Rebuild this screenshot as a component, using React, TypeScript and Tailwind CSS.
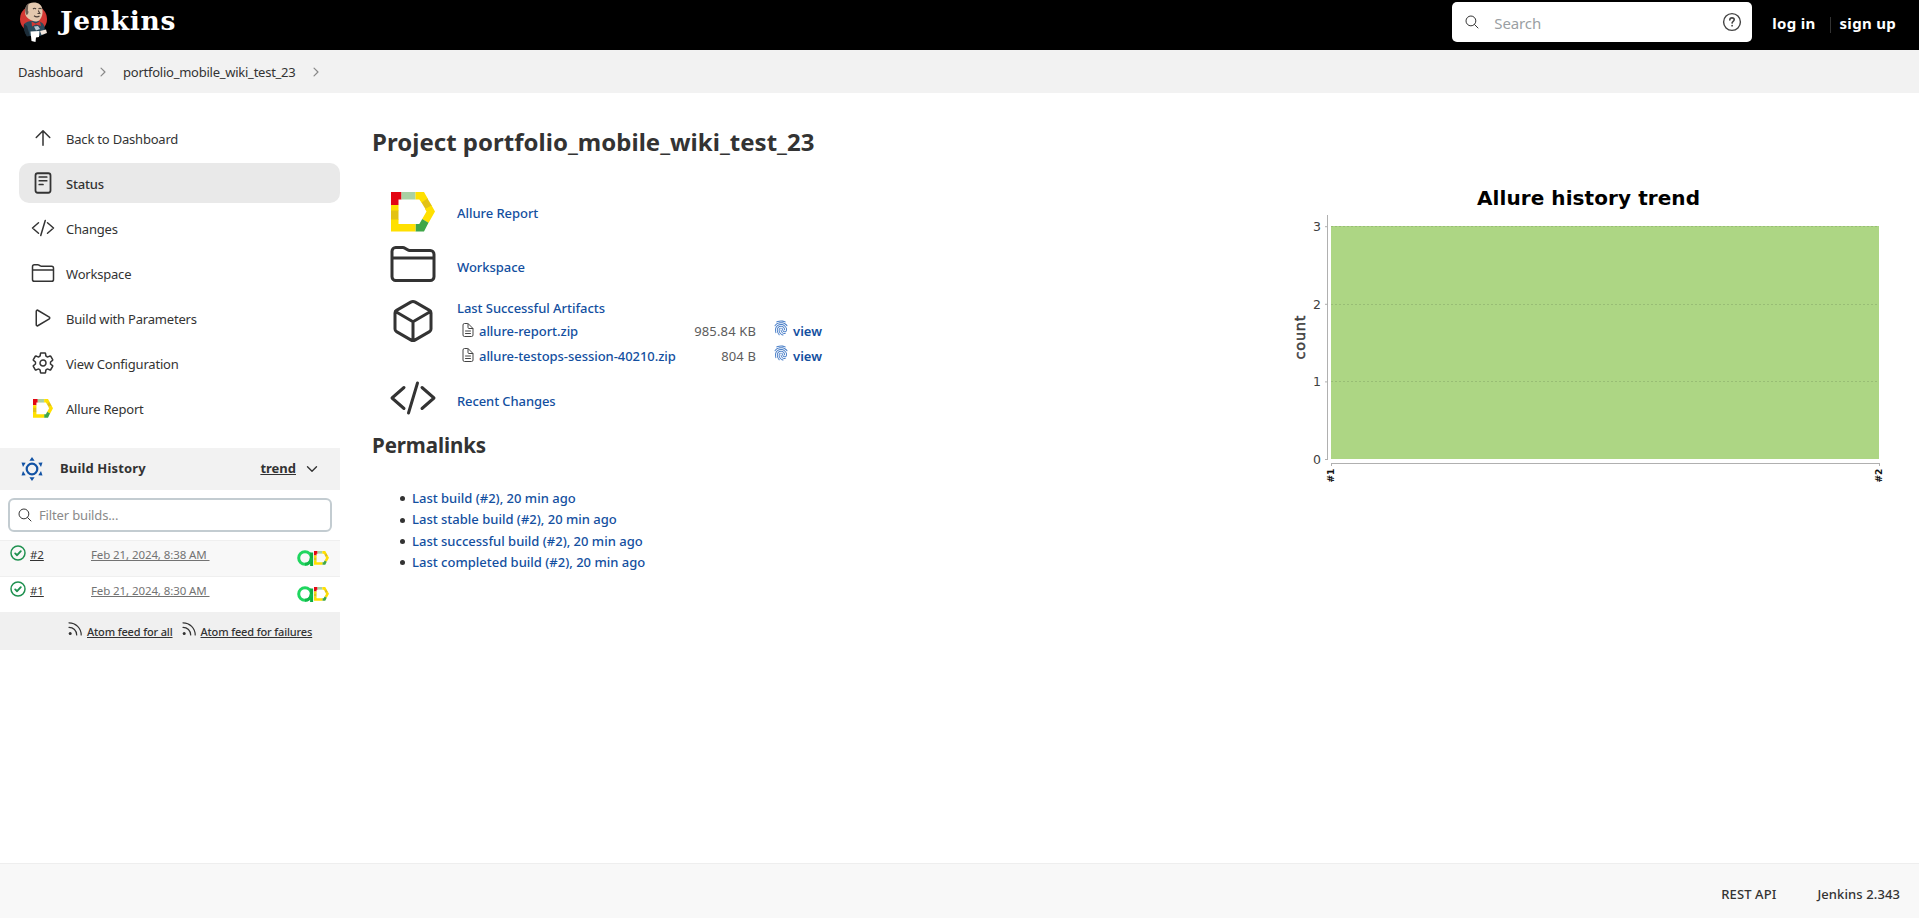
import React from "react";
import { IoFingerPrint, IoDocumentTextOutline, IoSearchOutline, IoSettingsOutline } from "react-icons/io5";

type IconProps = { className?: string };

function Stroke({ className, children }: IconProps & { children: React.ReactNode }) {
  return (
    <svg viewBox="0 0 512 512" className={className} fill="none" stroke="currentColor" strokeWidth="32" strokeLinecap="round" strokeLinejoin="round">
      {children}
    </svg>
  );
}

const ArrowUp = (p: IconProps) => (
  <Stroke {...p}><path d="M112 244 256 100 400 244M256 120V412" /></Stroke>
);
const Reader = (p: IconProps) => (
  <Stroke {...p}><rect x="96" y="48" width="320" height="416" rx="48" strokeWidth="38" /><path strokeWidth="36" d="M176 128h160M176 208h160M176 288h80" /></Stroke>
);
const Code = (p: IconProps) => (
  <Stroke {...p}><path d="M160 368 32 256 160 144M352 368 480 256 352 144M304 96 208 416" /></Stroke>
);
const Folder = (p: IconProps) => (
  <Stroke {...p}>
    <path d="M440 432H72a40 40 0 0 1-40-40V120a40 40 0 0 1 40-40h75.89a40 40 0 0 1 22.19 6.72l27.84 18.56a40 40 0 0 0 22.19 6.72H440a40 40 0 0 1 40 40V392a40 40 0 0 1-40 40ZM32 192H480" />
  </Stroke>
);
const Play = (p: IconProps) => (
  <Stroke {...p}><path d="M112 111V401c0 17.44 17 28.52 31 20.16l247.9-148.37c12.12-7.25 12.12-26.33 0-33.58L143 90.84C129 82.48 112 93.56 112 111Z" /></Stroke>
);
const Gear = (p: IconProps) => <IoSettingsOutline {...p} />;
const Cube = (p: IconProps) => (
  <Stroke {...p}>
    <path d="M448 341.37V170.61A32 32 0 0 0 432.11 143l-152-88.46a47.94 47.94 0 0 0-48.24 0L79.89 143A32 32 0 0 0 64 170.61V341.37A32 32 0 0 0 79.89 369l152 88.46a48 48 0 0 0 48.24 0l152-88.46A32 32 0 0 0 448 341.37ZM69 154 256 264 443 154M256 464V264" />
  </Stroke>
);
const ChevronRight = (p: IconProps) => (
  <Stroke {...p}><path strokeWidth="44" d="M184 112 328 256 184 400" /></Stroke>
);
const ChevronDown = (p: IconProps) => (
  <Stroke {...p}><path strokeWidth="44" d="M112 184 256 328 400 184" /></Stroke>
);
const Help = (p: IconProps) => (
  <svg viewBox="0 0 20 20" className={p.className} fill="none" stroke="currentColor" strokeWidth="1.4" strokeLinecap="round">
    <circle cx="10" cy="10" r="8.4" />
    <path strokeWidth="1.6" d="M7.8 8c0-1.5 1-2.1 2.2-2.1s2.2.8 2.2 1.9c0 1.500-2.100 1.700-2.100 3.300" />
    <circle cx="10.100" cy="13.700" r=".9" fill="currentColor" stroke="none" />
  </svg>
);
const Rss = (p: IconProps) => (
  <svg viewBox="0 0 14 14" className={p.className} fill="none" stroke="currentColor" strokeWidth="1.2" strokeLinecap="round">
    <path d="M1 .8c6.800 0 12.200 5.400 12.200 12.200M1 5.300c4.300 0 7.700 3.400 7.700 7.700" />
    <circle cx="2.200" cy="11.600" r="1.500" fill="currentColor" stroke="none" />
  </svg>
);
const Check = (p: IconProps) => (
  <svg viewBox="0 0 16 16" className={p.className} fill="none" stroke="#1f9150" strokeWidth="1.500" strokeLinecap="round" strokeLinejoin="round">
    <circle cx="8" cy="8" r="7" />
    <path strokeWidth="1.900" d="m5.200 8.400 1.900 1.800 3.700-4" />
  </svg>
);
const Allure = (p: IconProps) => (
  <svg viewBox="0 0 44 40" preserveAspectRatio="none" className={p.className}>
    <path fill="#e30613" d="M0 0h10.500v7.500H7.500V13H0z" />
    <path fill="#a9d1a3" d="M10.500 0h14v7.500h-14z" />
    <path fill="#ffe000" d="M24.500 0h8.500l4 7-6.200 4-2.500-3.500h-3.800z" />
    <path fill="#e3c213" d="m36.500 6.500 4.500 7.500-6.300 3.500-4.200-7z" />
    <path fill="#ffe000" d="m40.600 13.500 3.400 6-6.500 11.500-6.300-4 4.300-7.500-1.500-2.500z" />
    <path fill="#3fa648" d="m31.200 27 6.300 3.700L33 39.500h-8.500V32h3.800z" />
    <path fill="#ffe000" d="M0 27h7.500v5h17v7.500H0zM0 13h7.500v6H0z" />
    <path fill="#e3c213" d="M0 18.500h7.500V27.500H0z" />
  </svg>
);
const Testops = (p: IconProps) => (
  <svg viewBox="0 0 17 16" className={p.className} fill="none" strokeWidth="3">
    <circle cx="8" cy="8" r="6.300" stroke="#1fd65f" />
    <path d="M14.600 2.500V16" stroke="#0fae43" />
    <path d="M8 14.300A6.300 6.300 0 0 0 14.300 8" stroke="#12b94b" />
  </svg>
);
const Sun = (p: IconProps) => (
  <svg viewBox="0 0 22 24" className={p.className} fill="#1253a5">
    <circle cx="11" cy="12" r="5.300" fill="none" stroke="#1253a5" strokeWidth="2.200" />
    <path d="m11 0 2.600 3.800H8.400zM11 24l2.600-3.800H8.400zM.500 5.500l4.200.200-2.700 4.300zM21.500 5.500l-4.200.200L20 10zM.500 18.500l4.200-.200L2 14zM21.500 18.500l-4.200-.200L20 14z" />
  </svg>
);
const Butler = (p: IconProps) => (
  <svg viewBox="0 0 30 41" className={p.className}>
    <circle cx="14.500" cy="18" r="13.500" fill="#d33833" />
    <path fill="#2c4a5c" d="M5 23c2-2 5-3 8-3h6c4 1 6 3 6.500 6l.5 7-5 2H8c-2-4-3.500-8-3-12z" />
    <path fill="#1c2c38" d="M5 23c-1 4 .5 9 3 12.500l3-.5-3-10z" />
    <path fill="#e3c8ae" d="M6 11C6 5 9 1.500 14.500 1.500S23 4 23.500 9c.300 4-.5 7-2.500 9.500-2 2.500-5.500 2.500-8 1C9.500 18 6 16 6 11z" />
    <path fill="#6b5d54" d="M7.500 14C5.200 9 6 4.500 10 2 8.500 5 9.500 7 8.800 9.500c1.200 1 .7 4-1.300 4.500z" />
    <path fill="none" stroke="#4b3f38" strokeWidth="1.100" d="M14 8c1-1 2-1 3 0M19.500 8c1-1 2-1 3 0M15 14.700c2 1.500 4 1.300 5.500.300M19.300 9.500l1.500 3H18.500" />
    <path fill="#d33833" d="m12.500 20.500 4 2 4.500-2 1 4.500-5-1.500-4 2z" />
    <path fill="#b9c5d0" d="m15 25.500 4-.5 2 3-4 1.500z" />
    <path fill="#fff" d="m11.500 30.500 9-.5-.5 6-3 .5-.5 4.500-4-1z" />
    <path fill="#f2e6dc" d="m21 30 6-1.500 1 3.500-5.500 2z" />
  </svg>
);

const tasks = [
  { label: "Back to Dashboard", Icon: ArrowUp, tone: "" },
  { label: "Status", Icon: Reader, tone: "rounded-[10px] bg-[#e9e9e9] font-medium" },
  { label: "Changes", Icon: Code, tone: "" },
  { label: "Workspace", Icon: Folder, tone: "" },
  { label: "Build with Parameters", Icon: Play, tone: "" },
  { label: "View Configuration", Icon: Gear, tone: "" },
];

const builds = [
  { id: "#2", date: "Feb 21, 2024, 8:38 AM", tone: "bg-[#f8f8f8]" },
  { id: "#1", date: "Feb 21, 2024, 8:30 AM", tone: "bg-white" },
];

const artifacts = [
  { name: "allure-report.zip", size: "985.84 KB" },
  { name: "allure-testops-session-40210.zip", size: "804 B" },
];

const permalinks = ["Last build (#2), 20 min ago", "Last stable build (#2), 20 min ago", "Last successful build (#2), 20 min ago", "Last completed build (#2), 20 min ago"];

function Header() {
  return (
    <header className="flex h-[50px] shrink-0 items-start bg-black text-white">
      <a className="flex items-start pl-[19px]">
        <Butler className="mt-px h-[41px] w-[30px]" />
        <span className="mt-[3px] ml-[11px] font-['DejaVu_Serif',serif] text-[26.5px] leading-[36px] font-bold tracking-[0.7px]">Jenkins</span>
      </a>
      <div className="mt-[2px] ml-auto flex h-[40px] w-[300px] items-center rounded-[5px] bg-white pr-[10px] pl-[12px]">
        <IoSearchOutline className="h-4 w-4 text-[#333]" />
        <span className="mt-[3px] ml-[14px] text-[15px] tracking-[-0.1px] text-[#9a9fa3]">Search</span>
        <Help className="ml-auto h-[20px] w-[20px] text-[#444]" />
      </div>
      <div className="flex h-[47px] items-center pr-[23px] pl-[20px] text-[15px] font-bold tracking-[0.3px]">
        <a>log in</a>
        <span className="mt-0.5 ml-[14px] h-4 w-px bg-[#333]" />
        <a className="ml-[9px]">sign up</a>
      </div>
    </header>
  );
}

function Sidebar() {
  return (
    <aside className="w-[340px] shrink-0 pt-[25px]">
      <nav className="flex flex-col gap-[5px] pl-[19px] text-[13px] tracking-[-0.2px]">
        {tasks.map(({ label, Icon, tone }) => (
          <a key={label} className={"flex h-10 items-center pl-[12px] " + tone}>
            <Icon className="h-6 w-6 text-[#333]" />
            <span className="mt-[3px] ml-[11px]">{label}</span>
          </a>
        ))}
        <a className="flex h-10 items-center pl-[14px]">
          <Allure className="mt-px h-[19px] w-[20px]" />
          <span className="mt-[3px] ml-[13px]">Allure Report</span>
        </a>
      </nav>

      <section className="mt-[20px]">
        <div className="flex h-[42px] items-center bg-[#f2f2f2] pr-[20px] pl-[21px] text-[13px] font-bold">
          <Sun className="h-6 w-[22px]" />
          <span className="ml-[17px] tracking-[0.15px]">Build History</span>
          <a className="ml-auto underline">trend</a>
          <ChevronDown className="ml-[8px] h-4 w-4" />
        </div>
        <div className="px-2 py-[8px]">
          <div className="flex h-[34px] items-center rounded-[6px] border-2 border-[#c3ccd1] pl-[7px]">
            <IoSearchOutline className="h-4 w-4" />
            <span className="mt-px ml-[6px] text-[13px] tracking-[-0.15px] text-[#8a8a8a]">Filter builds...</span>
          </div>
        </div>
        {builds.map((b) => (
          <div key={b.id} className={"flex h-9 items-start border-t border-[#efefef] pr-[11px] pl-[10px] text-[11.5px] tracking-[-0.1px] " + b.tone}>
            <Check className="mt-[4px] h-4 w-4" />
            <a className="mt-[5px] ml-[4px] w-[61px] leading-[18px]"><span className="underline">{b.id}</span></a>
            <a className="mt-[5px] leading-[18px] whitespace-pre text-[#737373] underline">{b.date + " "}</a>
            <Testops className="mt-[9px] ml-auto h-4 w-[17px]" />
            <Allure className="mt-[10px] h-[14px] w-[15px]" />
          </div>
        ))}
        <div className="flex h-[38px] items-center bg-[#f0f0f0] pl-[68px] text-[11px] font-medium tracking-[-0.15px]">
          <Rss className="mb-[5px] h-[14px] w-[14px]" />
          <a className="mt-[3px] ml-[5px] underline">Atom feed for all</a>
          <Rss className="mb-[5px] ml-[9px] h-[14px] w-[14px]" />
          <a className="mt-[3px] ml-[5px] underline">Atom feed for failures</a>
        </div>
      </section>
    </aside>
  );
}

function TrendChart() {
  const ticks = [0, 1, 2, 3];
  return (
    <svg viewBox="1290 170 629 330" className="mt-[77px] ml-auto h-[330px] w-[629px]" fontFamily="'DejaVu Sans', sans-serif">
      <text x="1588.500" y="204.500" textAnchor="middle" fontSize="20" fontWeight="700" fill="#000" textLength="223">Allure history trend</text>
      <rect x="1331" y="226" width="548" height="233" fill="#add684" />
      {[226.5, 304.5, 381.5].map((y) => (
        <line key={y} x1="1331" x2="1879" y1={y} y2={y} stroke="#7f9f63" strokeOpacity=".45" strokeDasharray="2 2" />
      ))}
      <path d="M1327.500 215V459.500M1331 463.500H1879.500M1331.500 463v3M1879.500 463v3" fill="none" stroke="#b0b0b0" />
      {ticks.map((t) => (
        <g key={t}>
          <path d={`M1325 ${459.5 - t * 77.6}h3`} stroke="#b0b0b0" />
          <text x="1321" y={463.5 - t * 77.5} textAnchor="end" fontSize="12.500" fill="#404040">{t}</text>
        </g>
      ))}
      <text transform="translate(1305 337.500) rotate(-90)" textAnchor="middle" fontSize="14.500" fill="#404040" stroke="#404040" strokeWidth=".5" textLength="44">count</text>
      <text transform="translate(1333.500 482.500) rotate(-90)" fontSize="9" fontWeight="700" fill="#111">#1</text>
      <text transform="translate(1881.500 482.500) rotate(-90)" fontSize="9" fontWeight="700" fill="#111">#2</text>
    </svg>
  );
}

function Main() {
  return (
    <main className="flex min-w-0 flex-1 pl-[32px]">
      <div className="w-[560px] shrink-0">
        <h1 className="mt-[31px] text-[24px] leading-[36px] font-bold tracking-[0.02px] whitespace-nowrap">Project portfolio_mobile_wiki_test_23</h1>
        <div className="mt-[32px] flex flex-col pl-[19px] text-[13px] font-medium text-[#134fa0]">
          <a className="flex h-[39px] items-start">
            <Allure className="h-[40px] w-[44px]" />
            <span className="mt-[12px] ml-[22px] tracking-[-0.05px]">Allure Report</span>
          </a>
          <a className="mt-[9px] flex h-[48px] items-start">
            <Folder className="h-[48px] w-[48px] -translate-x-[2px] text-[#333]" />
            <span className="mt-[18px] ml-[18px] tracking-[-0.05px]">Workspace</span>
          </a>
          <div className="mt-[10px] flex items-start">
            <Cube className="-mt-px -ml-[2px] h-[48px] w-[48px] shrink-0 text-[#333]" />
            <div className="ml-[20px] w-[365px]">
              <a className="block leading-[20px] tracking-[-0.05px]">Last Successful Artifacts</a>
              <div className="mt-px flex flex-col pl-[3px]">
                {artifacts.map((a) => (
                  <div key={a.name} className="flex h-[25px] items-center">
                    <IoDocumentTextOutline className="mb-[4px] h-[16px] w-[16px] text-[#444]" />
                    <a className="ml-[3px] tracking-[-0.05px]">{a.name}</a>
                    <span className="ml-auto font-normal tracking-[0.15px] text-[#5c5c5c]">{a.size}</span>
                    <IoFingerPrint className="mb-[7px] ml-[17px] h-4 w-4 text-[#4a7fc8]" />
                    <a className="ml-[4px] font-semibold">view</a>
                  </div>
                ))}
              </div>
            </div>
          </div>
          <a className="mt-[5px] flex h-[48px] items-start">
            <Code className="h-[48px] w-[48px] -translate-x-[2px] text-[#333]" />
            <span className="mt-[18px] ml-[18px] tracking-[-0.1px]">Recent Changes</span>
          </a>
        </div>
        <h2 className="mt-[8px] text-[20.5px] leading-[30px] font-bold tracking-[-0.1px]">Permalinks</h2>
        <ul className="mt-[28px] pl-[28px] text-[13px] font-medium text-[#134fa0]">
          {permalinks.map((p) => (
            <li key={p} className="flex h-[21.4px] items-center">
              <span className="mr-[7px] h-[5px] w-[5px] rounded-full bg-[#333]" />
              <a>{p}</a>
            </li>
          ))}
        </ul>
      </div>
      <TrendChart />
    </main>
  );
}

export default function App() {
  return (
    <div className="flex h-[918px] w-full flex-col overflow-hidden bg-white font-['Noto_Sans',sans-serif] text-[#333]">
      <Header />
      <div className="flex h-[43px] shrink-0 items-center bg-[#f2f2f2] pl-[18px] text-[13px] tracking-[-0.25px]">
        <a className="mt-[2px]">Dashboard</a>
        <ChevronRight className="ml-[13px] h-[14px] w-[14px] text-[#888]" />
        <a className="mt-[2px] ml-[13px]">portfolio_mobile_wiki_test_23</a>
        <ChevronRight className="ml-[14px] h-[14px] w-[14px] text-[#888]" />
      </div>
      <div className="flex min-h-0 flex-1">
        <Sidebar />
        <Main />
      </div>
      <footer className="flex h-[55px] shrink-0 items-center justify-end gap-[41px] border-t border-[#eee] bg-[#f8f8f8] pt-[8px] pr-[19px] text-[13px] font-medium tracking-[0.1px]">
        <a>REST API</a>
        <span>Jenkins 2.343</span>
      </footer>
    </div>
  );
}
